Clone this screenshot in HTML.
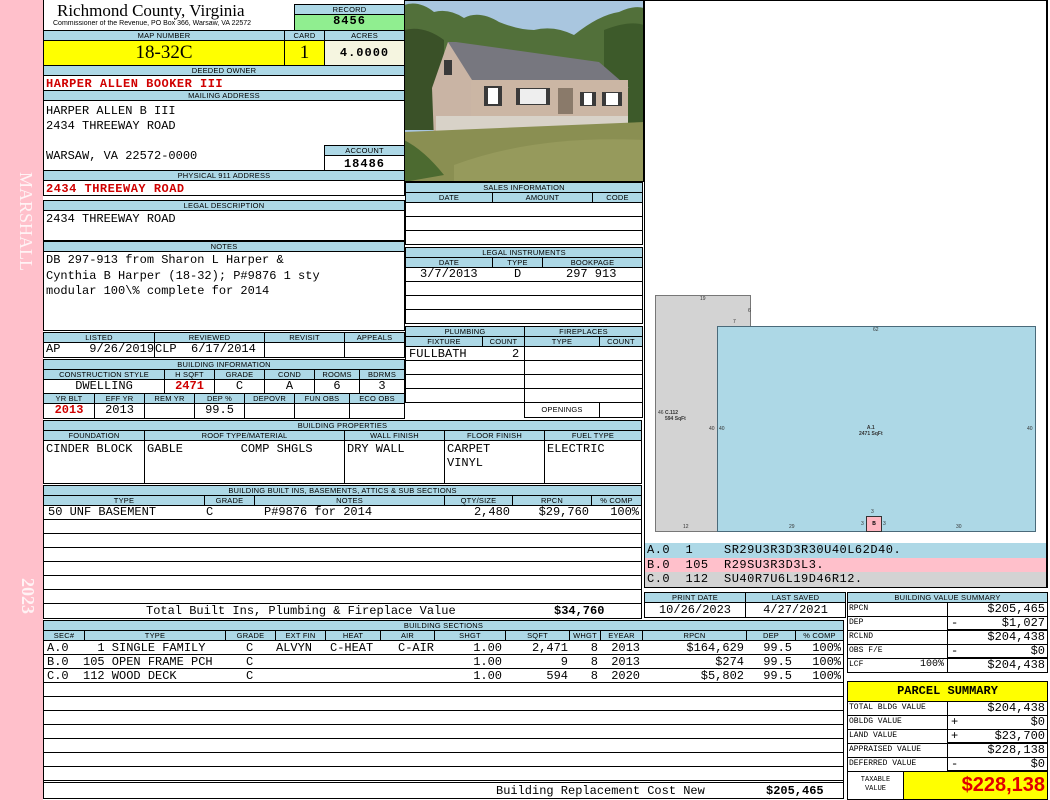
<!DOCTYPE html>
<html><head><meta charset="utf-8"><style>
*{margin:0;padding:0}
body{width:1050px;height:800px;position:relative;background:#fff;overflow:hidden;font-family:"Liberation Mono",monospace}
.c{position:absolute;box-sizing:border-box;border:1px solid #000;overflow:hidden;white-space:nowrap}
.n{position:absolute;box-sizing:border-box;overflow:hidden;white-space:nowrap}
.h{background:#add8e6;font:7.5px "Liberation Sans",sans-serif;text-align:center;line-height:9px;letter-spacing:.2px}
.m{font:12px "Liberation Mono",monospace;line-height:13px;padding:0 2px}
.r{text-align:right}.ct{text-align:center}
.red{color:#d00000;font-weight:bold}
.s{font:8px "Liberation Mono",monospace;line-height:12px;padding-left:1px}
.lbl{position:absolute;font:5px "Liberation Sans",sans-serif;color:#333}
</style></head><body>
<div class="n" style="left:0;top:0;width:43px;height:800px;background:#ffc0cb"></div>
<div class="n" style="left:8px;top:172px;width:28px;height:110px;color:#fff3f5;font:18px 'Liberation Serif',serif;writing-mode:vertical-rl">MARSHALL</div>
<div class="n" style="left:10px;top:578px;width:28px;height:50px;color:#fff3f5;font:bold 18px 'Liberation Serif',serif;writing-mode:vertical-rl">2023</div>

<!-- header -->
<div class="c" style="left:43px;top:0;width:362px;height:31px;border-bottom:none;border-top:none"></div>
<div class="n" style="left:57px;top:1px;font:17px 'Liberation Serif',serif;line-height:20px">Richmond County, Virginia</div>
<div class="n" style="left:53px;top:20px;font:7px 'Liberation Sans',sans-serif">Commissioner of the Revenue, PO Box 366, Warsaw, VA 22572</div>
<div class="c h" style="left:294px;top:4px;width:111px;height:11px">RECORD</div>
<div class="c m ct" style="left:294px;top:14px;width:111px;height:17px;background:#90ee90;font-weight:bold;letter-spacing:1px">8456</div>
<div class="c h" style="left:43px;top:30px;width:242px;height:11px">MAP NUMBER</div>
<div class="c h" style="left:284px;top:30px;width:41px;height:11px">CARD</div>
<div class="c h" style="left:324px;top:30px;width:81px;height:11px">ACRES</div>
<div class="c ct" style="left:43px;top:40px;width:242px;height:26px;background:#ffff00;font:19px 'Liberation Serif',serif;line-height:24px">18-32C</div>
<div class="c ct" style="left:284px;top:40px;width:41px;height:26px;background:#ffff00;font:19px 'Liberation Serif',serif;line-height:24px">1</div>
<div class="c ct m" style="left:324px;top:40px;width:81px;height:26px;background:#f5f5e0;font-weight:bold;line-height:24px;letter-spacing:1px">4.0000</div>
<div class="c h" style="left:43px;top:65px;width:362px;height:11px">DEEDED OWNER</div>
<div class="c m red" style="left:43px;top:75px;width:362px;height:16px;line-height:16px;letter-spacing:.5px">HARPER ALLEN BOOKER III</div>
<div class="c h" style="left:43px;top:90px;width:362px;height:11px">MAILING ADDRESS</div>
<div class="c m" style="left:43px;top:100px;width:362px;height:71px;padding-top:3px;line-height:15px">HARPER ALLEN B III<br>2434 THREEWAY ROAD<br><br>WARSAW, VA 22572-0000</div>
<div class="c h" style="left:324px;top:145px;width:81px;height:11px">ACCOUNT</div>
<div class="c m ct" style="left:324px;top:155px;width:81px;height:16px;font-weight:bold;line-height:16px;letter-spacing:1px">18486</div>
<div class="c h" style="left:43px;top:170px;width:362px;height:11px">PHYSICAL 911 ADDRESS</div>
<div class="c m red" style="left:43px;top:180px;width:362px;height:16px;line-height:16px;letter-spacing:.5px">2434 THREEWAY ROAD</div>
<div class="c h" style="left:43px;top:200px;width:362px;height:11px">LEGAL DESCRIPTION</div>
<div class="c m" style="left:43px;top:210px;width:362px;height:31px;padding-top:2px">2434 THREEWAY ROAD</div>
<div class="c h" style="left:43px;top:241px;width:362px;height:11px">NOTES</div>
<div class="c m" style="left:43px;top:251px;width:362px;height:80px;padding-top:1px;line-height:15.5px">DB 297-913 from Sharon L Harper &amp;<br>Cynthia B Harper (18-32); P#9876 1 sty<br>modular 100\% complete for 2014</div>

<!-- listed -->
<div class="c h" style="left:43px;top:332px;width:112px;height:11px">LISTED</div>
<div class="c h" style="left:154px;top:332px;width:111px;height:11px">REVIEWED</div>
<div class="c h" style="left:264px;top:332px;width:81px;height:11px">REVISIT</div>
<div class="c h" style="left:344px;top:332px;width:61px;height:11px">APPEALS</div>
<div class="c m" style="left:43px;top:342px;width:112px;height:16px">AP&nbsp;&nbsp;&nbsp;&nbsp;9/26/2019</div>
<div class="c m" style="left:154px;top:342px;width:111px;height:16px;padding:0">CLP&nbsp;&nbsp;6/17/2014</div>
<div class="c" style="left:264px;top:342px;width:81px;height:16px"></div>
<div class="c" style="left:344px;top:342px;width:61px;height:16px"></div>

<!-- building info -->
<div class="c h" style="left:43px;top:359px;width:362px;height:11px">BUILDING INFORMATION</div>
<div class="c h" style="left:43px;top:369px;width:122px;height:11px">CONSTRUCTION STYLE</div>
<div class="c h" style="left:164px;top:369px;width:51px;height:11px">H SQFT</div>
<div class="c h" style="left:214px;top:369px;width:51px;height:11px">GRADE</div>
<div class="c h" style="left:264px;top:369px;width:51px;height:11px">COND</div>
<div class="c h" style="left:314px;top:369px;width:46px;height:11px">ROOMS</div>
<div class="c h" style="left:359px;top:369px;width:46px;height:11px">BDRMS</div>
<div class="c m ct" style="left:43px;top:379px;width:122px;height:15px">DWELLING</div>
<div class="c m ct red" style="left:164px;top:379px;width:51px;height:15px">2471</div>
<div class="c m ct" style="left:214px;top:379px;width:51px;height:15px">C</div>
<div class="c m ct" style="left:264px;top:379px;width:51px;height:15px">A</div>
<div class="c m ct" style="left:314px;top:379px;width:46px;height:15px">6</div>
<div class="c m ct" style="left:359px;top:379px;width:46px;height:15px">3</div>
<div class="c h" style="left:43px;top:393px;width:52px;height:11px">YR BLT</div>
<div class="c h" style="left:94px;top:393px;width:51px;height:11px">EFF YR</div>
<div class="c h" style="left:144px;top:393px;width:51px;height:11px">REM YR</div>
<div class="c h" style="left:194px;top:393px;width:51px;height:11px">DEP %</div>
<div class="c h" style="left:244px;top:393px;width:51px;height:11px">DEPOVR</div>
<div class="c h" style="left:294px;top:393px;width:56px;height:11px">FUN OBS</div>
<div class="c h" style="left:349px;top:393px;width:56px;height:11px">ECO OBS</div>
<div class="c m ct red" style="left:43px;top:403px;width:52px;height:16px">2013</div>
<div class="c m ct" style="left:94px;top:403px;width:51px;height:16px">2013</div>
<div class="c" style="left:144px;top:403px;width:51px;height:16px"></div>
<div class="c m ct" style="left:194px;top:403px;width:51px;height:16px">99.5</div>
<div class="c" style="left:244px;top:403px;width:51px;height:16px"></div>
<div class="c" style="left:294px;top:403px;width:56px;height:16px"></div>
<div class="c" style="left:349px;top:403px;width:56px;height:16px"></div>

<!-- building properties -->
<div class="c h" style="left:43px;top:420px;width:599px;height:11px">BUILDING PROPERTIES</div>
<div class="c h" style="left:43px;top:430px;width:102px;height:11px">FOUNDATION</div>
<div class="c h" style="left:144px;top:430px;width:201px;height:11px">ROOF TYPE/MATERIAL</div>
<div class="c h" style="left:344px;top:430px;width:101px;height:11px">WALL FINISH</div>
<div class="c h" style="left:444px;top:430px;width:101px;height:11px">FLOOR FINISH</div>
<div class="c h" style="left:544px;top:430px;width:98px;height:11px">FUEL TYPE</div>
<div class="c m" style="left:43px;top:440px;width:102px;height:44px;padding-top:1px;line-height:14px">CINDER BLOCK</div>
<div class="c m" style="left:144px;top:440px;width:201px;height:44px;padding-top:1px;line-height:14px">GABLE&nbsp;&nbsp;&nbsp;&nbsp;&nbsp;&nbsp;&nbsp;&nbsp;COMP SHGLS</div>
<div class="c m" style="left:344px;top:440px;width:101px;height:44px;padding-top:1px;line-height:14px">DRY WALL</div>
<div class="c m" style="left:444px;top:440px;width:101px;height:44px;padding-top:1px;line-height:14px">CARPET<br>VINYL</div>
<div class="c m" style="left:544px;top:440px;width:98px;height:44px;padding-top:1px;line-height:14px">ELECTRIC</div>

<!-- built ins -->
<div class="c h" style="left:43px;top:485px;width:599px;height:11px">BUILDING BUILT INS, BASEMENTS, ATTICS &amp; SUB SECTIONS</div>
<div class="c h" style="left:43px;top:495px;width:162px;height:11px">TYPE</div>
<div class="c h" style="left:204px;top:495px;width:51px;height:11px">GRADE</div>
<div class="c h" style="left:254px;top:495px;width:191px;height:11px">NOTES</div>
<div class="c h" style="left:444px;top:495px;width:69px;height:11px">QTY/SIZE</div>
<div class="c h" style="left:512px;top:495px;width:80px;height:11px">RPCN</div>
<div class="c h" style="left:591px;top:495px;width:51px;height:11px">% COMP</div>
<div class="c" style="left:43px;top:505px;width:599px;height:99px;background:repeating-linear-gradient(#fff 0 13px,#000 13px 14px)"></div>
<div class="n m" style="left:46px;top:506px;">50 UNF BASEMENT</div>
<div class="n m" style="left:204px;top:506px;">C</div>
<div class="n m" style="left:262px;top:506px;">P#9876 for 2014</div>
<div class="n m r" style="left:444px;top:506px;width:68px">2,480</div>
<div class="n m r" style="left:512px;top:506px;width:79px">$29,760</div>
<div class="n m r" style="left:591px;top:506px;width:50px">100%</div>
<div class="c m" style="left:43px;top:603px;width:599px;height:16px;line-height:15px"><span style="position:absolute;left:102px">Total Built Ins, Plumbing &amp; Fireplace Value</span><b style="position:absolute;left:510px">$34,760</b></div>

<!-- building sections -->
<div class="c h" style="left:43px;top:620px;width:801px;height:11px">BUILDING SECTIONS</div>
<div class="c h" style="left:43px;top:630px;width:42px;height:11px">SEC#</div>
<div class="c h" style="left:84px;top:630px;width:142px;height:11px">TYPE</div>
<div class="c h" style="left:225px;top:630px;width:51px;height:11px">GRADE</div>
<div class="c h" style="left:275px;top:630px;width:51px;height:11px">EXT FIN</div>
<div class="c h" style="left:325px;top:630px;width:56px;height:11px">HEAT</div>
<div class="c h" style="left:380px;top:630px;width:55px;height:11px">AIR</div>
<div class="c h" style="left:434px;top:630px;width:72px;height:11px">SHGT</div>
<div class="c h" style="left:505px;top:630px;width:65px;height:11px">SQFT</div>
<div class="c h" style="left:569px;top:630px;width:32px;height:11px">WHGT</div>
<div class="c h" style="left:600px;top:630px;width:43px;height:11px">EYEAR</div>
<div class="c h" style="left:642px;top:630px;width:105px;height:11px">RPCN</div>
<div class="c h" style="left:746px;top:630px;width:50px;height:11px">DEP</div>
<div class="c h" style="left:795px;top:630px;width:49px;height:11px">% COMP</div>
<div class="c" style="left:43px;top:640px;width:801px;height:143px;background:repeating-linear-gradient(#fff 0 13px,#000 13px 14px)"></div>
<div class="n m" style="left:45px;top:641px;line-height:14px">A.0&nbsp;&nbsp;&nbsp;&nbsp;1 SINGLE FAMILY<br>B.0&nbsp;&nbsp;105 OPEN FRAME PCH<br>C.0&nbsp;&nbsp;112 WOOD DECK</div>
<div class="n m" style="left:244px;top:641px;line-height:14px">C<br>C<br>C</div>
<div class="n m" style="left:274px;top:641px;line-height:14px">ALVYN</div>
<div class="n m" style="left:328px;top:641px;line-height:14px">C-HEAT</div>
<div class="n m" style="left:396px;top:641px;line-height:14px">C-AIR</div>
<div class="n m r" style="left:434px;top:641px;width:70px;line-height:14px">1.00<br>1.00<br>1.00</div>
<div class="n m r" style="left:505px;top:641px;width:65px;line-height:14px">2,471<br>9<br>594</div>
<div class="n m r" style="left:569px;top:641px;width:31px;line-height:14px">8<br>8<br>8</div>
<div class="n m r" style="left:600px;top:641px;width:42px;line-height:14px">2013<br>2013<br>2020</div>
<div class="n m r" style="left:642px;top:641px;width:104px;line-height:14px">$164,629<br>$274<br>$5,802</div>
<div class="n m r" style="left:746px;top:641px;width:48px;line-height:14px">99.5<br>99.5<br>99.5</div>
<div class="n m r" style="left:795px;top:641px;width:48px;line-height:14px">100%<br>100%<br>100%</div>
<div class="c m" style="left:43px;top:782px;width:801px;height:17px;line-height:16px"><span style="position:absolute;left:452px">Building Replacement Cost New</span><b style="position:absolute;left:722px">$205,465</b></div>

<!-- photo -->
<svg class="n" style="left:404px;top:0" width="240" height="182" viewBox="0 0 240 182">
<rect width="240" height="182" fill="#a9c6df"/>
<path d="M0 5 Q15 0 30 12 Q45 8 60 18 Q75 10 95 22 Q115 30 130 30 Q150 25 170 35 Q195 15 215 12 Q230 5 240 8 V125 H0Z" fill="#52703a"/>
<path d="M0 30 Q20 25 40 40 L40 130 H0Z" fill="#3a5128"/>
<path d="M200 30 Q225 20 240 25 V125 H200Z" fill="#3d5a2a"/>
<polygon points="44,42 30,85 225,88 195,62 52,42" fill="#77777f"/>
<path d="M44 42 L28 88 L30 140 L68 135 L68 80 Z" fill="#c9b4a4"/>
<rect x="67" y="80" width="157" height="43" fill="#cbb6a4"/>
<rect x="32" y="116" width="192" height="22" fill="#d8d2c8"/>
<rect x="40" y="60" width="8" height="15" fill="#3a3a3a"/>
<rect x="80" y="86" width="18" height="20" fill="#3a3a3a"/><rect x="84" y="88" width="10" height="16" fill="#fff"/>
<rect x="112" y="88" width="34" height="17" fill="#3a3a3a"/><rect x="116" y="89" width="26" height="15" fill="#eee"/>
<rect x="176" y="92" width="16" height="14" fill="#3a3a3a"/><rect x="180" y="93" width="8" height="12" fill="#fff"/>
<rect x="198" y="92" width="20" height="14" fill="#3a3a3a"/><rect x="202" y="93" width="12" height="12" fill="#fff"/>
<rect x="154" y="88" width="15" height="26" fill="#8a7a6a"/>
<path d="M0 132 L240 122 V182 H0Z" fill="#8a8f52"/>
<path d="M50 165 Q130 135 240 140 V182 H50Z" fill="#969a5c"/>
<path d="M0 140 Q20 150 40 175 L0 182Z" fill="#4c6a30"/>
<rect x="0" y="0" width="240" height="182" fill="none" stroke="#000" stroke-width="2"/>
</svg>

<!-- sales -->
<div class="c h" style="left:405px;top:182px;width:238px;height:11px">SALES INFORMATION</div>
<div class="c h" style="left:405px;top:192px;width:88px;height:11px">DATE</div>
<div class="c h" style="left:492px;top:192px;width:101px;height:11px">AMOUNT</div>
<div class="c h" style="left:592px;top:192px;width:51px;height:11px">CODE</div>
<div class="c" style="left:405px;top:202px;width:238px;height:43px;background:repeating-linear-gradient(#fff 0 13px,#000 13px 14px)"></div>
<div class="c h" style="left:405px;top:247px;width:238px;height:11px">LEGAL INSTRUMENTS</div>
<div class="c h" style="left:405px;top:257px;width:88px;height:11px">DATE</div>
<div class="c h" style="left:492px;top:257px;width:51px;height:11px">TYPE</div>
<div class="c h" style="left:542px;top:257px;width:101px;height:11px">BOOKPAGE</div>
<div class="c" style="left:405px;top:267px;width:238px;height:57px;background:repeating-linear-gradient(#fff 0 13px,#000 13px 14px)"></div>
<div class="n m" style="left:418px;top:268px">3/7/2013</div>
<div class="n m" style="left:512px;top:268px">D</div>
<div class="n m" style="left:564px;top:268px">297 913</div>

<!-- plumbing -->
<div class="c h" style="left:405px;top:326px;width:120px;height:11px">PLUMBING</div>
<div class="c h" style="left:524px;top:326px;width:119px;height:11px">FIREPLACES</div>
<div class="c h" style="left:405px;top:336px;width:78px;height:11px">FIXTURE</div>
<div class="c h" style="left:482px;top:336px;width:43px;height:11px">COUNT</div>
<div class="c h" style="left:524px;top:336px;width:76px;height:11px">TYPE</div>
<div class="c h" style="left:599px;top:336px;width:44px;height:11px">COUNT</div>
<div class="c" style="left:405px;top:346px;width:120px;height:57px;background:repeating-linear-gradient(#fff 0 13px,#000 13px 14px)"></div>
<div class="c" style="left:524px;top:346px;width:119px;height:57px;background:repeating-linear-gradient(#fff 0 13px,#000 13px 14px)"></div>
<div class="n m" style="left:407px;top:348px">FULLBATH</div>
<div class="n m" style="left:510px;top:348px">2</div>
<div class="c h" style="left:524px;top:402px;width:76px;height:16px;background:#fff;line-height:14px">OPENINGS</div>
<div class="c" style="left:599px;top:402px;width:44px;height:16px"></div>

<!-- right sketch -->
<div class="c" style="left:644px;top:0;width:404px;height:544px;border-width:1px 2px 1px 1px"></div>
<div class="n" style="left:655px;top:295px;width:96px;height:237px;background:#d3d3d3;border:1px solid #777"></div>
<div class="n" style="left:717px;top:326px;width:319px;height:206px;background:#add8e6;border:1px solid #4a6a7a"></div>
<div class="n" style="left:866px;top:516px;width:16px;height:16px;background:#ffb6c1;border:1px solid #333;font:bold 5px 'Liberation Sans';text-align:center;line-height:14px">B</div>
<div class="lbl" style="left:700px;top:296px">19</div><div class="lbl" style="left:748px;top:308px">6</div><div class="lbl" style="left:733px;top:319px">7</div>
<div class="lbl" style="left:873px;top:327px">62</div><div class="lbl" style="left:658px;top:410px">46</div>
<div class="lbl" style="left:665px;top:410px;font-weight:bold">C.112<br>594 SqFt</div>
<div class="lbl" style="left:709px;top:426px">40</div><div class="lbl" style="left:719px;top:426px">40</div>
<div class="lbl" style="left:1027px;top:426px">40</div>
<div class="lbl" style="left:859px;top:425px;font-weight:bold;text-align:center">A.1<br>2471 SqFt</div>
<div class="lbl" style="left:871px;top:509px">3</div><div class="lbl" style="left:861px;top:521px">3</div><div class="lbl" style="left:883px;top:521px">3</div>
<div class="lbl" style="left:683px;top:524px">12</div><div class="lbl" style="left:789px;top:524px">29</div><div class="lbl" style="left:956px;top:524px">30</div>

<div class="c" style="left:644px;top:543px;width:404px;height:45px;border-width:1px 2px 1px 1px"></div>
<div class="n m" style="left:645px;top:543px;width:401px;height:15px;background:#add8e6;font-size:12px;line-height:15px;letter-spacing:.5px">A.0&nbsp;&nbsp;1&nbsp;&nbsp;&nbsp;&nbsp;SR29U3R3D3R30U40L62D40.</div>
<div class="n m" style="left:645px;top:558px;width:401px;height:14px;background:#ffc0cb;font-size:12px;line-height:14px;letter-spacing:.5px">B.0&nbsp;&nbsp;105&nbsp;&nbsp;R29SU3R3D3L3.</div>
<div class="n m" style="left:645px;top:572px;width:401px;height:15px;background:#d3d3d3;font-size:12px;line-height:15px;letter-spacing:.5px">C.0&nbsp;&nbsp;112&nbsp;&nbsp;SU40R7U6L19D46R12.</div>

<!-- print date -->
<div class="c h" style="left:644px;top:592px;width:102px;height:11px">PRINT DATE</div>
<div class="c h" style="left:745px;top:592px;width:101px;height:11px">LAST SAVED</div>
<div class="c m ct" style="left:644px;top:602px;width:102px;height:16px;line-height:15px">10/26/2023</div>
<div class="c m ct" style="left:745px;top:602px;width:101px;height:16px;line-height:15px">4/27/2021</div>

<!-- value summary -->
<div class="c h" style="left:847px;top:592px;width:201px;height:11px">BUILDING VALUE SUMMARY</div>
<div class="c s" style="left:847px;top:602px;width:101px;height:15px">RPCN</div><div class="c m r" style="left:947px;top:602px;width:101px;height:15px">$205,465</div>
<div class="c s" style="left:847px;top:616px;width:101px;height:15px">DEP</div><div class="c m r" style="left:947px;top:616px;width:101px;height:15px;border-bottom-width:2px">$1,027<span style="position:absolute;left:3px">-</span></div>
<div class="c s" style="left:847px;top:630px;width:101px;height:15px">RCLND</div><div class="c m r" style="left:947px;top:630px;width:101px;height:15px">$204,438</div>
<div class="c s" style="left:847px;top:644px;width:101px;height:15px">OBS F/E</div><div class="c m r" style="left:947px;top:644px;width:101px;height:15px;border-bottom-width:2px">$0<span style="position:absolute;left:3px">-</span></div>
<div class="c s" style="left:847px;top:658px;width:101px;height:15px">LCF<span style="position:absolute;right:3px;font-size:10px">100%</span></div><div class="c m r" style="left:947px;top:658px;width:101px;height:15px">$204,438</div>

<!-- parcel summary -->
<div class="c ct" style="left:847px;top:681px;width:201px;height:21px;background:#ffff00;font:bold 12px 'Liberation Mono',monospace;line-height:19px">PARCEL SUMMARY</div>
<div class="c s" style="left:847px;top:701px;width:101px;height:15px">TOTAL BLDG VALUE</div><div class="c m r" style="left:947px;top:701px;width:101px;height:15px">$204,438</div>
<div class="c s" style="left:847px;top:715px;width:101px;height:15px">OBLDG VALUE</div><div class="c m r" style="left:947px;top:715px;width:101px;height:15px">$0<span style="position:absolute;left:3px">+</span></div>
<div class="c s" style="left:847px;top:729px;width:101px;height:15px">LAND VALUE</div><div class="c m r" style="left:947px;top:729px;width:101px;height:15px;border-bottom-width:2px">$23,700<span style="position:absolute;left:3px">+</span></div>
<div class="c s" style="left:847px;top:743px;width:101px;height:15px">APPRAISED VALUE</div><div class="c m r" style="left:947px;top:743px;width:101px;height:15px">$228,138</div>
<div class="c s" style="left:847px;top:757px;width:101px;height:15px">DEFERRED VALUE</div><div class="c m r" style="left:947px;top:757px;width:101px;height:15px;border-bottom-width:2px">$0<span style="position:absolute;left:3px">-</span></div>
<div class="c ct" style="left:847px;top:771px;width:57px;height:29px;font:7px 'Liberation Mono',monospace;line-height:9px;padding-top:4px">TAXABLE<br>VALUE</div>
<div class="c r" style="left:903px;top:771px;width:145px;height:29px;background:#ffff00;color:#e00000;font:bold 20px 'Liberation Sans',sans-serif;line-height:27px;padding-right:2px">$228,138</div>
</body></html>
